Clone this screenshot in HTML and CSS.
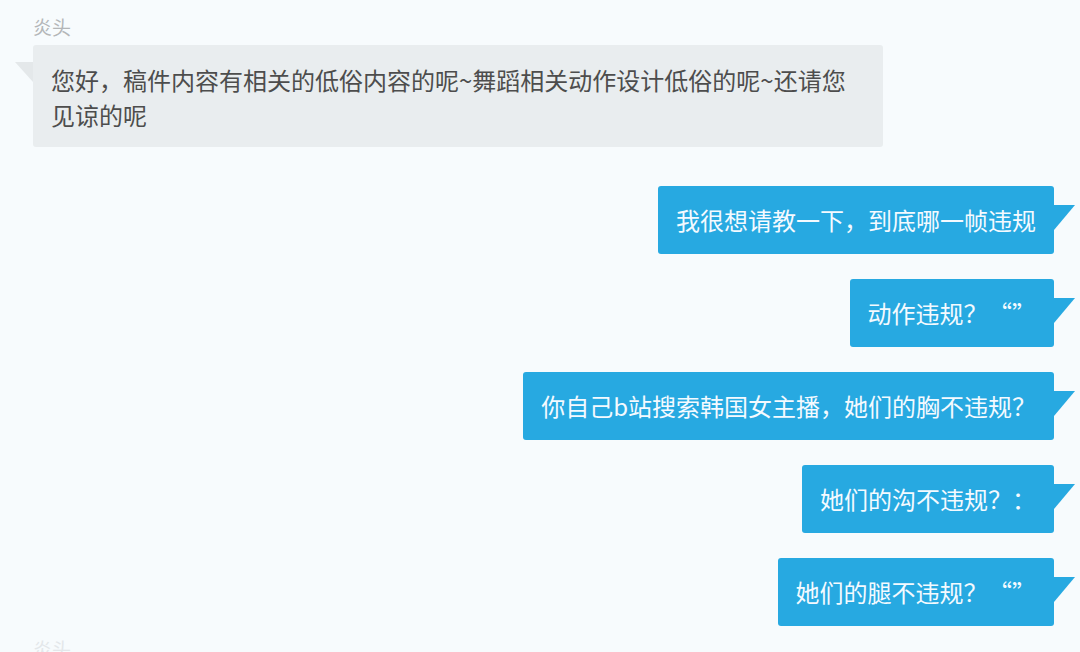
FILE: index.html
```html
<!DOCTYPE html>
<html lang="zh-CN">
<head>
<meta charset="utf-8">
<title>聊天记录</title>
<link rel="stylesheet" href="styles.css">
</head>
<body>
<div class="chat">
  <div class="msg msg-left">
    <div class="name">炎头</div>
    <div class="bubble bubble-gray">您好，稿件内容有相关的低俗内容的呢~舞蹈相关动作设计低俗的呢~还请您<br>见谅的呢</div>
  </div>
  <div class="msg msg-right first">
    <div class="bubble bubble-blue">我很想请教一下，到底哪一帧违规</div>
  </div>
  <div class="msg msg-right">
    <div class="bubble bubble-blue">动作违规？ “”</div>
  </div>
  <div class="msg msg-right">
    <div class="bubble bubble-blue">你自己b站搜索韩国女主播，她们的胸不违规？</div>
  </div>
  <div class="msg msg-right">
    <div class="bubble bubble-blue">她们的沟不违规？：</div>
  </div>
  <div class="msg msg-right">
    <div class="bubble bubble-blue">她们的腿不违规？ “”</div>
  </div>
  <div class="msg msg-left last">
    <div class="name name-faint">炎头</div>
  </div>
</div>
</body>
</html>
```

FILE: styles.css
```css
html, body {
  margin: 0;
  padding: 0;
}

body {
  width: 1080px;
  height: 652px;
  overflow: hidden;
  background: #f7fbfd;
  font-family: "Noto Sans CJK SC", "Microsoft YaHei", sans-serif;
}

.chat {
  display: flex;
  flex-direction: column;
  padding: 14px 26px 0 33px;
}

.msg {
  display: flex;
  flex-direction: column;
}

.msg-left {
  align-items: flex-start;
}

.msg-right {
  align-items: flex-end;
  margin-top: 25px;
}

.msg-right.first {
  margin-top: 39px;
}

.msg-left.last {
  margin-top: 10px;
}

.name {
  font-size: 19px;
  line-height: 26px;
  color: #b3b6b8;
  margin-bottom: 5px;
}

.name-faint {
  color: #e3e7ea;
}

.bubble {
  position: relative;
  font-size: 24px;
  border-radius: 3px;
  box-sizing: border-box;
}

.bubble-gray {
  width: 850px;
  padding: 17px 18px 15px;
  line-height: 35px;
  background: #e9edef;
  color: #4d4d4d;
}

.bubble-gray::before {
  content: "";
  position: absolute;
  left: -18px;
  top: 17px;
  width: 0;
  height: 0;
  border-top: 20px solid #e4e8ea;
  border-left: 18px solid transparent;
}

.bubble-blue {
  height: 68px;
  line-height: 68px;
  padding: 0 18px;
  background: #27a9e1;
  color: #f4faff;
  white-space: nowrap;
  word-spacing: -5px;
}

.bubble-blue::after {
  content: "";
  position: absolute;
  right: -21px;
  top: 19px;
  width: 0;
  height: 0;
  border-top: 25px solid #27a9e1;
  border-right: 21px solid transparent;
}
```
